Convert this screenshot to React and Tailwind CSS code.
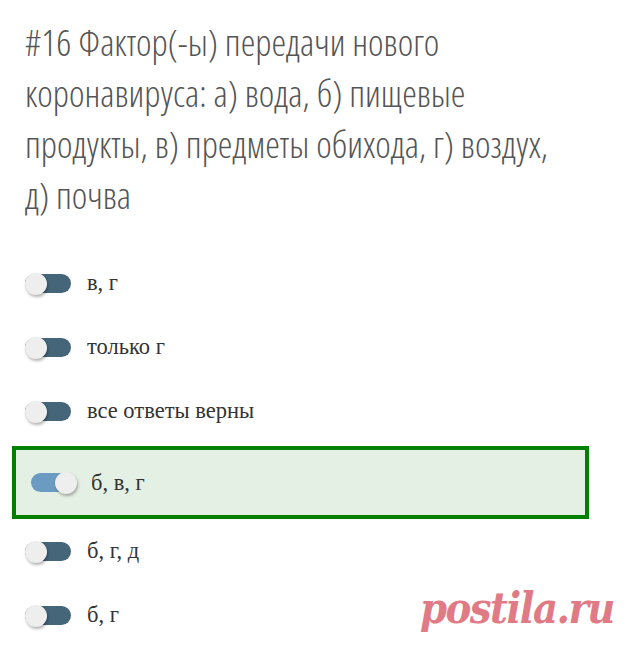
import React, { useState } from 'react';

const options = [
  'в, г',
  'только г',
  'все ответы верны',
  'б, в, г',
  'б, г, д',
  'б, г',
];

const Toggle = ({ on }) => (
  <span className="relative inline-block w-[46px] h-[19px] shrink-0">
    <span
      className={
        on
          ? 'absolute inset-0 right-[4px] rounded-full bg-[#6b9bc3]'
          : 'absolute inset-0 rounded-full bg-[#446678]'
      }
    />
    <span
      className={
        on
          ? 'absolute top-[-1px] right-0 w-[22px] h-[22px] rounded-full bg-[#eeeeee] shadow-[1px_2px_3px_rgba(0,0,0,0.3)]'
          : 'absolute top-[-1px] left-0 w-[22px] h-[22px] rounded-full bg-[#eeeeee] shadow-[1px_2px_3px_rgba(0,0,0,0.3)]'
      }
    />
  </span>
);

const App = () => {
  const [selected, setSelected] = useState(3);

  return (
    <div className="relative w-[637px] h-[649px] bg-white overflow-hidden">
      <h2 className="pt-[16px] pl-[25px] pr-[72px] text-[37px] leading-[51px] font-light font-stretch-condensed text-[#555] font-['Open_Sans',sans-serif]">
        #16 Фактор(-ы) передачи нового коронавируса: а) вода, б) пищевые продукты, в) предметы обихода, г) воздух, д) почва
      </h2>

      <div className="mt-[31px]">
        {options.map((text, i) =>
          i === selected ? (
            <div
              key={i}
              onClick={() => setSelected(i)}
              className="mt-[3px] ml-[12px] w-[577px] h-[73px] border-4 border-[#008000] bg-[#e5f0e5] flex items-center pl-[15px] gap-[14px] cursor-pointer"
            >
              <Toggle on />
              <span className="text-[22.5px] text-[#333] font-['Liberation_Serif',serif]">{text}</span>
            </div>
          ) : (
            <div
              key={i}
              onClick={() => setSelected(i)}
              className="h-[64px] flex items-center pl-[25px] gap-[16px] cursor-pointer"
            >
              <Toggle />
              <span className="text-[22.5px] text-[#333] font-['Liberation_Serif',serif]">{text}</span>
            </div>
          )
        )}
      </div>

      {/* watermark */}
      <div className="absolute left-[420px] top-[587px] text-[43px] leading-none font-bold italic tracking-[-1.5px] text-[#e07b86] font-['DejaVu_Serif_Condensed','DejaVu_Serif',serif]">
        postila.ru
      </div>
    </div>
  );
};

export default App;
